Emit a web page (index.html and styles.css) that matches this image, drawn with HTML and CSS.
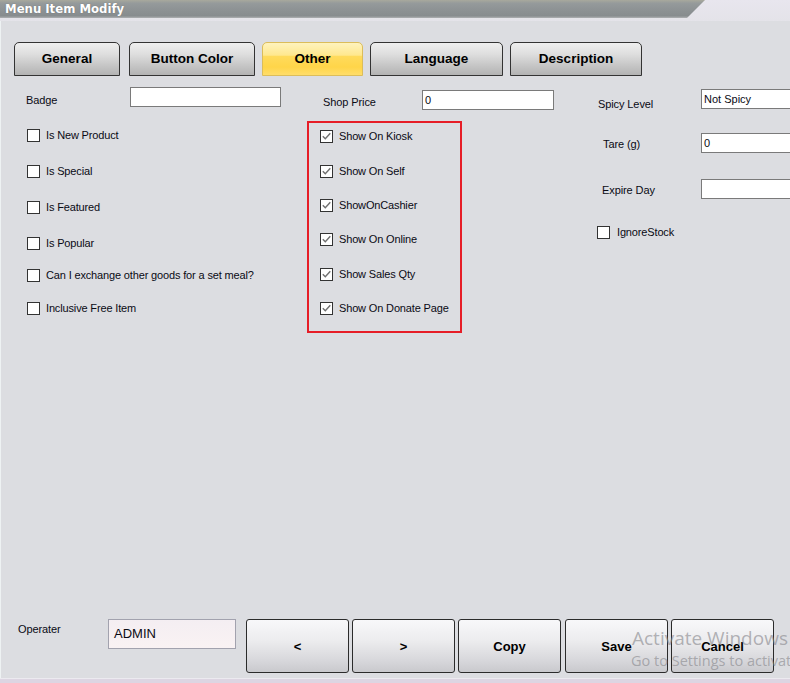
FILE: index.html
```html
<!DOCTYPE html>
<html>
<head>
<meta charset="utf-8">
<title>Menu Item Modify</title>
<link rel="stylesheet" href="styles.css">
</head>
<body>
<div class="window">
  <div class="titlebar">
    <div class="title-fill"><span class="title-text">Menu Item Modify</span></div>
  </div>
  <div class="main">
    <div class="tabs">
      <div class="tab tab-general">General</div>
      <div class="tab tab-color">Button Color</div>
      <div class="tab tab-other active">Other</div>
      <div class="tab tab-lang">Language</div>
      <div class="tab tab-desc">Description</div>
    </div>

    <div class="form">
      <div class="col col-left">
        <div class="field badge-row">
          <span class="lbl lbl-badge">Badge</span>
          <div class="input input-badge"></div>
        </div>
        <div class="checks left-checks">
          <div class="check"><span class="box"></span><span class="clabel">Is New Product</span></div>
          <div class="check"><span class="box"></span><span class="clabel">Is Special</span></div>
          <div class="check"><span class="box"></span><span class="clabel">Is Featured</span></div>
          <div class="check"><span class="box"></span><span class="clabel">Is Popular</span></div>
          <div class="check"><span class="box"></span><span class="clabel">Can I exchange other goods for a set meal?</span></div>
          <div class="check"><span class="box"></span><span class="clabel">Inclusive Free Item</span></div>
        </div>
      </div>

      <div class="col col-mid">
        <div class="field price-row">
          <span class="lbl lbl-price">Shop Price</span>
          <div class="input input-price">0</div>
        </div>
        <div class="redbox">
          <div class="checks mid-checks">
            <div class="check"><span class="box checked"><svg viewBox="0 0 11 11" width="11" height="11"><path d="M1.8 5.2 L4.3 7.8 L9.3 2.2" fill="none" stroke="#707070" stroke-width="1.4"/></svg></span><span class="clabel">Show On Kiosk</span></div>
            <div class="check"><span class="box checked"><svg viewBox="0 0 11 11" width="11" height="11"><path d="M1.8 5.2 L4.3 7.8 L9.3 2.2" fill="none" stroke="#707070" stroke-width="1.4"/></svg></span><span class="clabel">Show On Self</span></div>
            <div class="check"><span class="box checked"><svg viewBox="0 0 11 11" width="11" height="11"><path d="M1.8 5.2 L4.3 7.8 L9.3 2.2" fill="none" stroke="#707070" stroke-width="1.4"/></svg></span><span class="clabel">ShowOnCashier</span></div>
            <div class="check"><span class="box checked"><svg viewBox="0 0 11 11" width="11" height="11"><path d="M1.8 5.2 L4.3 7.8 L9.3 2.2" fill="none" stroke="#707070" stroke-width="1.4"/></svg></span><span class="clabel">Show On Online</span></div>
            <div class="check"><span class="box checked"><svg viewBox="0 0 11 11" width="11" height="11"><path d="M1.8 5.2 L4.3 7.8 L9.3 2.2" fill="none" stroke="#707070" stroke-width="1.4"/></svg></span><span class="clabel">Show Sales Qty</span></div>
            <div class="check"><span class="box checked"><svg viewBox="0 0 11 11" width="11" height="11"><path d="M1.8 5.2 L4.3 7.8 L9.3 2.2" fill="none" stroke="#707070" stroke-width="1.4"/></svg></span><span class="clabel">Show On Donate Page</span></div>
          </div>
        </div>
      </div>

      <div class="col col-right">
        <div class="field spicy-row">
          <span class="lbl lbl-spicy">Spicy Level</span>
          <div class="input input-right">Not Spicy</div>
        </div>
        <div class="field tare-row">
          <span class="lbl lbl-tare">Tare (g)</span>
          <div class="input input-right">0</div>
        </div>
        <div class="field expire-row">
          <span class="lbl lbl-expire">Expire Day</span>
          <div class="input input-right"></div>
        </div>
        <div class="check ignore-row"><span class="box"></span><span class="clabel">IgnoreStock</span></div>
      </div>
    </div>

    <div class="footer">
      <span class="lbl lbl-oper">Operater</span>
      <div class="input input-oper">ADMIN</div>
      <div class="buttons">
        <div class="btn">&lt;</div>
        <div class="btn">&gt;</div>
        <div class="btn">Copy</div>
        <div class="btn btn-save">Save</div>
        <div class="btn">Cancel</div>
      </div>
    </div>
  </div>
  <div class="bottom-strip"></div>
  <div class="watermark">
    <div class="wm1">Activate Windows</div>
    <div class="wm2">Go to Settings to activate Windows.</div>
  </div>
</div>
</body>
</html>
```

FILE: styles.css
```css
html, body {
  margin: 0;
  padding: 0;
  width: 790px;
  height: 683px;
  overflow: hidden;
  background: #dcdde1;
}

.window {
  position: relative;
  width: 790px;
  height: 683px;
  overflow: hidden;
  font-family: "Liberation Sans", Arial, sans-serif;
  font-size: 11px;
  color: #0a0a14;
  display: flex;
  flex-direction: column;
}

.titlebar {
  height: 21px;
  flex: none;
  background: linear-gradient(#e8e6ee, #e4e3e9);
}

.title-fill {
  height: 18px;
  background: linear-gradient(#a8a99d 0, #959a9b 18%, #8c9193 60%, #878c8e 88%, #aeb0b2 100%);
  clip-path: polygon(0 0, 705px 0, 687px 100%, 0 100%);
  display: flex;
  align-items: center;
}

.title-text {
  margin-left: 5px;
  font-family: "DejaVu Sans", sans-serif;
  font-weight: bold;
  font-size: 11.7px;
  color: #ffffff;
  text-shadow: 0 0 1px rgba(60,60,60,0.5);
  line-height: 16px;
}

.main {
  height: 657px;
  flex: none;
  display: flex;
  flex-direction: column;
  box-shadow: inset 1px 0 0 #eef2f3;
}

/* Tabs */
.tabs {
  display: flex;
  margin: 21px 0 0 14px;
  gap: 7px;
}

.tab {
  box-sizing: border-box;
  height: 34px;
  border: 1px solid #333;
  border-radius: 5px 5px 0 0;
  background: linear-gradient(#efefef 0%, #dedede 35%, #c6c6c6 70%, #b3b3b3 100%);
  font-weight: bold;
  font-size: 13.5px;
  color: #000;
  display: flex;
  align-items: center;
  justify-content: center;
  padding-bottom: 2px;
}

.tab-general { width: 106px; margin-right: 2px; }
.tab-color { width: 126px; }
.tab-other { width: 101px; }
.tab-lang { width: 133px; }
.tab-desc { width: 132px; }

.tab.active {
  border-color: #dcbd5a;
  background: linear-gradient(#fff3bd 0%, #ffe88f 38%, #ffdb5c 42%, #ffd549 75%, #ffdd6a 100%);
}

/* Form */
.form {
  display: flex;
  padding-left: 26px;
}

.col { display: flex; flex-direction: column; }

.col-left { width: 255px; padding-top: 11px; }
.col-mid { width: 247px; margin-left: 26px; padding-top: 14px; }
.col-right { flex: 1; margin-left: 43px; padding-top: 13px; }

.field { display: flex; align-items: flex-start; }

.lbl {
  line-height: 13px;
  white-space: nowrap;
  letter-spacing: -0.1px;
}

.input {
  box-sizing: border-box;
  height: 20px;
  background: #fff;
  border: 1px solid #7a7a7a;
  padding-left: 2px;
  line-height: 18px;
  font-size: 11px;
  white-space: nowrap;
  overflow: hidden;
  flex: none;
}

.lbl-badge { width: 104px; margin-top: 7px; }
.input-badge { width: 151px; }

.lbl-price { width: 99px; margin-left: 16px; margin-top: 6px; }
.input-price { width: 132px; }

.lbl-spicy { width: 103px; margin-left: 1px; margin-top: 9px; }
.lbl-tare { width: 98px; margin-left: 6px; margin-top: 5px; }
.lbl-expire { width: 99px; margin-left: 5px; margin-top: 5px; }
.input-right { width: 120px; }

.tare-row { margin-top: 22px; }
.expire-row { margin-top: 26px; }

/* Checkboxes */
.checks { display: grid; align-items: start; }

.left-checks {
  margin-top: 22px;
  margin-left: 1px;
  grid-template-rows: 36px 36px 36px 32px 33px 13px;
}

.check {
  display: flex;
  align-items: center;
  height: 13px;
}

.box {
  box-sizing: border-box;
  width: 13px;
  height: 13px;
  flex: none;
  border: 1px solid #333;
  background: #fff;
  margin-right: 6px;
  display: flex;
  align-items: center;
  justify-content: center;
}

.box svg { display: block; }

.clabel {
  line-height: 13px;
  white-space: nowrap;
  letter-spacing: -0.15px;
}

.redbox {
  box-sizing: border-box;
  width: 155px;
  margin-top: 11px;
  border: 2px solid #e61d27;
  padding: 7px 0 16px 11px;
}

.mid-checks {
  grid-template-rows: 35px 34px 34px 35px 34px 13px;
}

.ignore-row { margin-top: 27px; }
.ignore-row .box { margin-right: 7px; }

/* Footer */
.footer {
  margin-top: auto;
  display: flex;
  align-items: flex-start;
  padding: 0 0 5px 18px;
}

.lbl-oper { width: 90px; margin-top: 4px; }

.input-oper {
  width: 128px;
  height: 30px;
  line-height: 28px;
  padding-left: 5px;
  font-size: 13px;
  border-color: #a2a2ae;
  background: linear-gradient(#f4eef2, #f9f2f3);
}

.buttons {
  display: flex;
  gap: 3px;
  margin-left: 10px;
}

.btn {
  box-sizing: border-box;
  width: 103px;
  height: 54px;
  border: 1px solid #2b2b2b;
  border-radius: 3px;
  background: linear-gradient(#f8f8fa 0%, #ececee 40%, #d6d6da 80%, #c9c9cd 100%);
  font-weight: bold;
  font-size: 13px;
  color: #000;
  display: flex;
  align-items: center;
  justify-content: center;
  padding-top: 1px;
}

.btn-save { margin-left: 1px; }

.bottom-strip {
  flex: 1;
  border-top: 1px solid #eceaf0;
  background: #ddd5e2;
}

/* Windows activation watermark overlay */
.watermark {
  position: absolute;
  left: 632px;
  top: 625px;
  white-space: nowrap;
  font-family: "Open Sans", "Noto Sans", sans-serif;
  color: rgba(135, 135, 140, 0.62);
  pointer-events: none;
}

.wm1 { font-size: 19px; line-height: 26px; }
.wm2 { font-size: 14.5px; line-height: 20px; margin-left: -1px; }
```
